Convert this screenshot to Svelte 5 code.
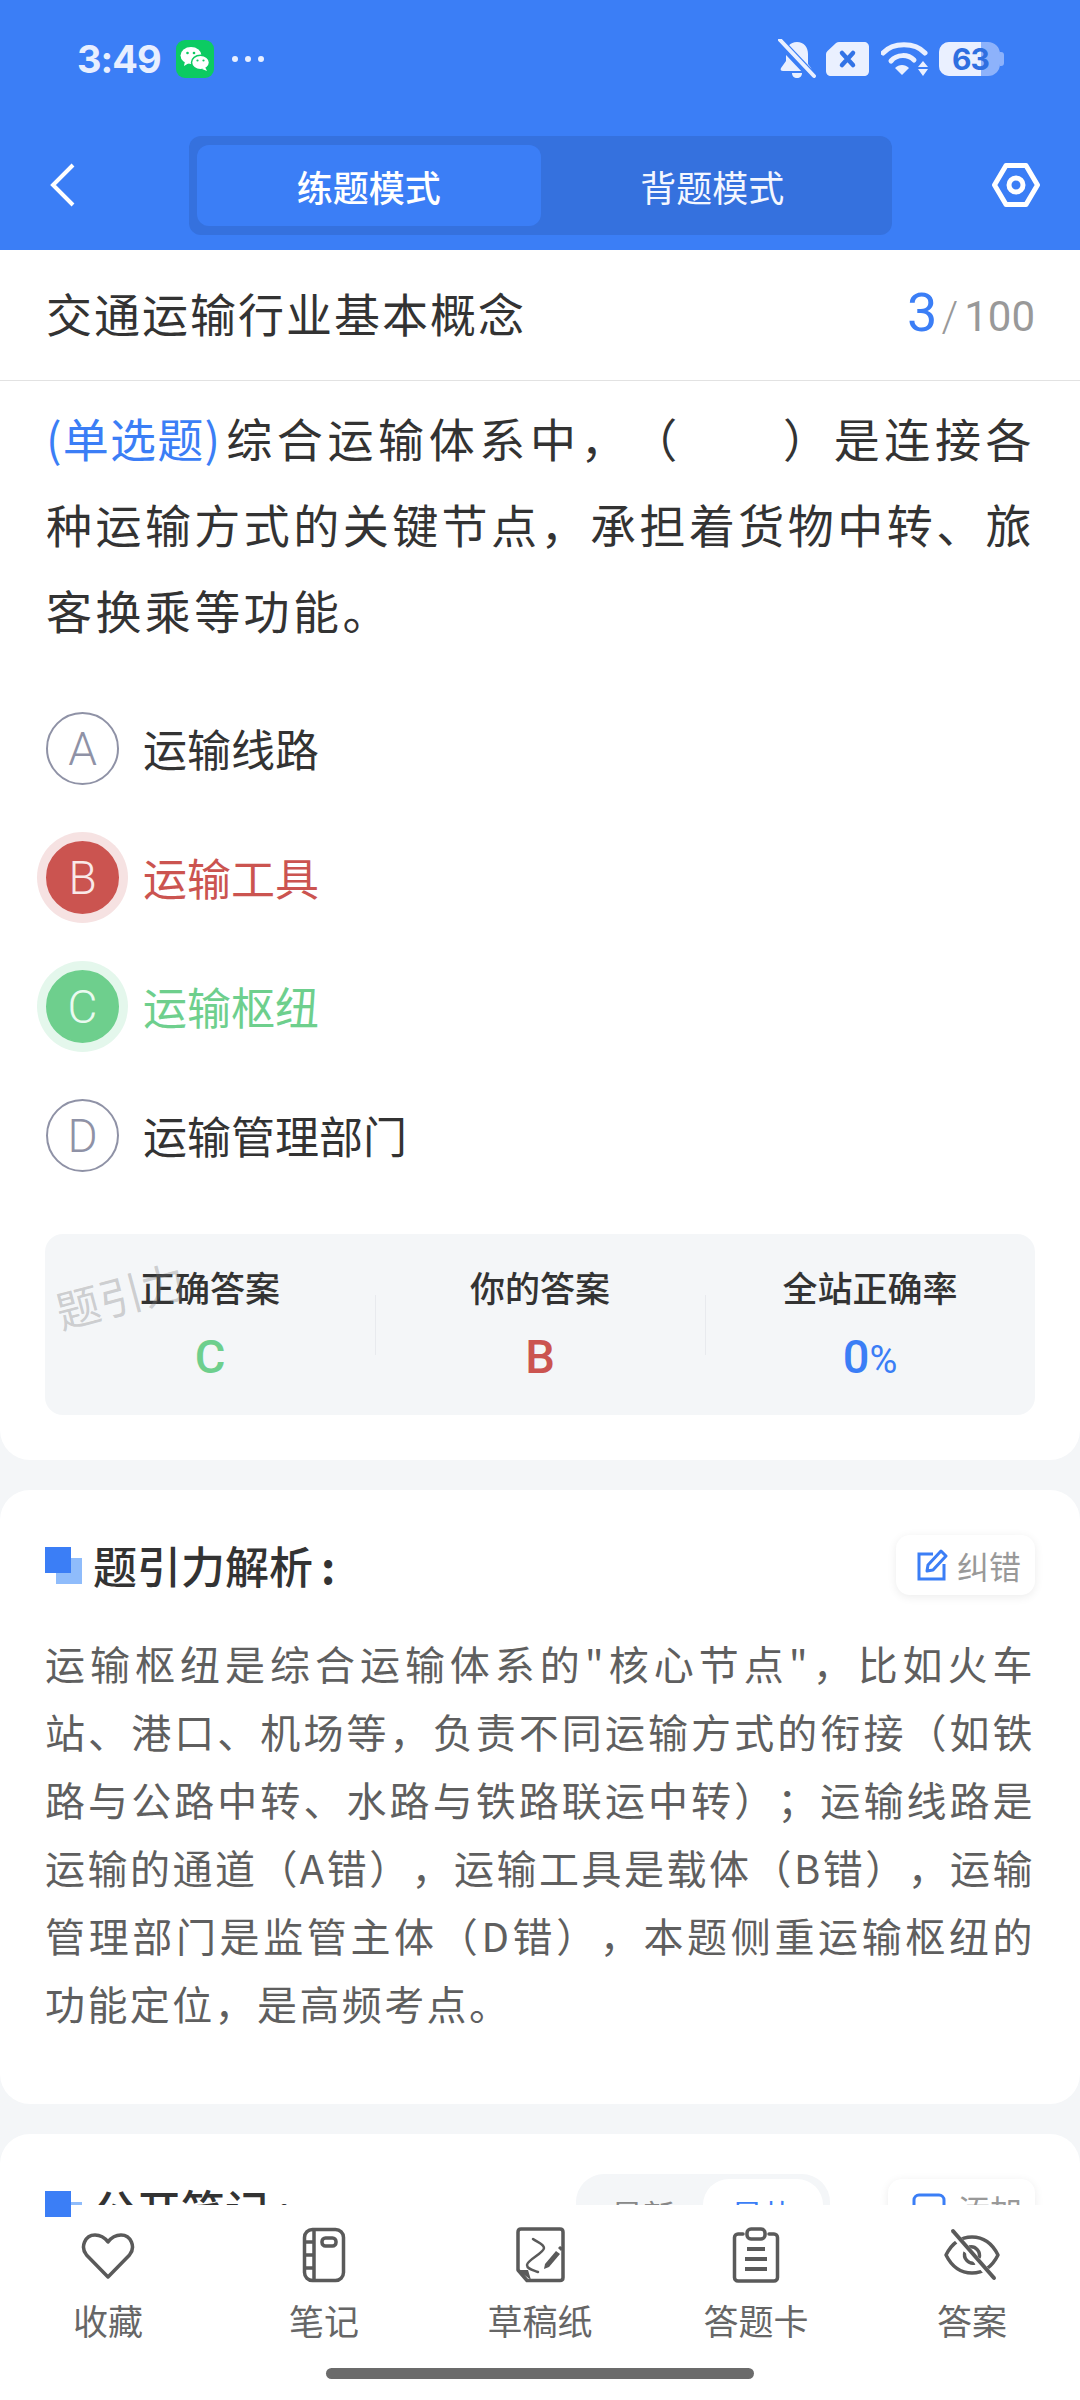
<script>
	const options = [
		{ key: 'A', text: '运输线路', state: '' },
		{ key: 'B', text: '运输工具', state: 'wrong' },
		{ key: 'C', text: '运输枢纽', state: 'right' },
		{ key: 'D', text: '运输管理部门', state: '' }
	];
	const stats = [
		{ label: '正确答案', value: 'C', cls: 'right' },
		{ label: '你的答案', value: 'B', cls: 'wrong' },
		{ label: '全站正确率', value: '0', unit: '%', cls: 'blue' }
	];
	const explain = '运输枢纽是综合运输体系的"核心节点"，比如火车站、港口、机场等，负责不同运输方式的衔接（如铁路与公路中转、水路与铁路联运中转）；运输线路是运输的通道（A错），运输工具是载体（B错），运输管理部门是监管主体（D错），本题侧重运输枢纽的功能定位，是高频考点。';
</script>

<div class="page">
	<header class="top">
		<div class="status">
			<span class="time">3:49</span>
			<svg class="wechat" width="38" height="38" viewBox="0 0 38 38">
				<rect width="38" height="38" rx="9" fill="#0ccb62" />
				<ellipse cx="15" cy="15.5" rx="10.5" ry="8.5" fill="#fff" />
				<path d="M9 21l-1 5 5-3z" fill="#fff" />
				<ellipse cx="24.5" cy="22.5" rx="9" ry="7.3" fill="#fff" stroke="#0ccb62" stroke-width="1.5" />
				<path d="M29 27l2 4-5-2z" fill="#fff" />
				<circle cx="11.500" cy="13" r="1.300" fill="#0ccb62" />
				<circle cx="18" cy="13" r="1.300" fill="#0ccb62" />
				<circle cx="21.500" cy="20.500" r="1.100" fill="#0ccb62" />
				<circle cx="27.500" cy="20.500" r="1.100" fill="#0ccb62" />
			</svg>
			<span class="dots"><i></i><i></i><i></i></span>
			<span class="spacer"></span>
			<svg width="38" height="40" viewBox="0 0 38 40" fill="#eaf0ff">
				<path d="M19 3c-7 0-11 5-11 12v7l-5 7c-1 2 0 3 2 3h26c2 0 3-1 2-3l-3-4V15c0-7-4-12-11-12z" />
				<path d="M14 34h10c0 3-2 5-5 5s-5-2-5-5z" />
				<path d="M2 3l33 35" stroke="#3b7ef6" stroke-width="9" />
				<path d="M2 1l34 36" stroke="#eaf0ff" stroke-width="4" stroke-linecap="round" />
			</svg>
			<svg class="sim" width="43" height="34" viewBox="0 0 43 34">
				<path d="M13 0h25c3 0 5 2 5 5v24c0 3-2 5-5 5H5c-3 0-5-2-5-5V12c0-1 .5-2 1.500-3L10 1c1-.7 2-1 3-1z" fill="#eaf0ff" />
				<path d="M16 11l11 12M27 11L16 23" stroke="#3273e6" stroke-width="4.500" stroke-linecap="round" />
			</svg>
			<svg class="wifi" width="47" height="34" viewBox="0 0 47 34" fill="none">
				<path d="M2 11C12 0 34 0 44 11" stroke="#eaf0ff" stroke-width="5" stroke-linecap="round" />
				<path d="M10 19c6-7 17-7 23-1" stroke="#eaf0ff" stroke-width="5" stroke-linecap="round" />
				<path d="M14 26c4-4 10-4 14 0l-7 7z" fill="#eaf0ff" />
				<path d="M42 19l5 6H37zM37 27h10l-5 7z" fill="#eaf0ff" />
			</svg>
			<div class="battery">
				<div class="batt-fill"></div>
				<span class="batt-num">63</span>
				<i class="batt-tip"></i>
			</div>
		</div>
		<nav class="bar">
			<svg class="back" width="26" height="46" viewBox="0 0 26 46" fill="none">
				<path d="M23 3L3 23l20 20" stroke="#fff" stroke-width="4" />
			</svg>
			<div class="seg">
				<div class="tab active">练题模式</div>
				<div class="tab">背题模式</div>
			</div>
			<svg class="gear" width="48" height="44" viewBox="0 0 48 44" fill="none">
				<path d="M14 2.500h20L45.500 22 34 41.500H14L2.500 22z" stroke="#fff" stroke-width="5" stroke-linejoin="round" />
				<circle cx="24" cy="22" r="7" stroke="#fff" stroke-width="5" />
			</svg>
		</nav>
	</header>

	<section class="card first">
		<div class="title-row">
			<h1>交通运输行业基本概念</h1>
			<div class="count"><b>3</b><span class="slash">/</span><span>100</span></div>
		</div>
		<div class="body">
			<p class="question"><span class="type">(单选题)</span>综合运输体系中，（　　）是连接各种运输方式的关键节点，承担着货物中转、旅客换乘等功能。</p>
			<div class="options">
				{#each options as o}
					<div class="option {o.state}">
						<span class="mark">{o.key}</span>
						<span class="opt-text">{o.text}</span>
					</div>
				{/each}
			</div>
			<div class="stats">
				<span class="watermark">题引力</span>
				{#each stats as s}
					<div class="stat">
						<div class="stat-label">{s.label}</div>
						<div class="stat-value {s.cls}">{s.value}{#if s.unit}<small>{s.unit}</small>{/if}</div>
					</div>
				{/each}
			</div>
		</div>
	</section>

	<section class="card">
		<div class="head">
			<span class="squares"><i></i><i></i></span>
			<h2>题引力解析<span class="colon">:</span></h2>
			<div class="pill">
				<svg width="32" height="32" viewBox="0 0 32 32" fill="none">
					<path d="M17 5H3v25h25V15" stroke="#3b7ef6" stroke-width="3" />
					<path d="M12 16L25 2l5 5-13 14-6 1z" stroke="#3b7ef6" stroke-width="3" stroke-linejoin="round" />
				</svg>
				<span>纠错</span>
			</div>
		</div>
		<p class="explain">{explain}</p>
	</section>

	<section class="card">
		<div class="head">
			<span class="squares"><i></i><i></i></span>
			<h2>公开笔记<span class="colon">:</span></h2>
			<div class="sort">
				<span>最新</span>
				<span class="on">最热</span>
			</div>
			<div class="pill add">
				<svg width="34" height="32" viewBox="0 0 34 32" fill="none">
					<rect x="2" y="2" width="30" height="27" rx="5" stroke="#3b7ef6" stroke-width="3" />
				</svg>
				<span>添加</span>
			</div>
		</div>
	</section>

	<footer class="dock">
		<div class="tools">
			<div class="tool">
				<svg width="56" height="56" viewBox="0 0 56 56" fill="none" stroke="#5a5a5a" stroke-width="3.500">
					<path d="M28 50L6.500 28C0 20 5 8 15 8c6 0 10 3 13 7 3-4 7-7 13-7 10 0 15 12 8.500 20z" stroke-linejoin="round" />
				</svg>
				<span>收藏</span>
			</div>
			<div class="tool">
				<svg width="56" height="56" viewBox="0 0 56 56" fill="none" stroke="#5a5a5a" stroke-width="3.500">
					<rect x="8.500" y="2.500" width="39" height="51" rx="8" />
					<path d="M18 3v50M8.500 15H18M8.500 28H18M8.500 41H18" />
					<rect x="26" y="11" width="14" height="8" rx="3.500" />
				</svg>
				<span>笔记</span>
			</div>
			<div class="tool">
				<svg width="56" height="56" viewBox="0 0 56 56" fill="none" stroke="#5a5a5a" stroke-width="3.500">
					<path d="M15 53.500H48c2 0 3-1 3-3V5c0-2-1-3-3-3H9C7 2 6 3 6 5v38z" stroke-linejoin="round" />
					<path d="M7 43h9l3 10-12-9z" fill="#5a5a5a" stroke="none" />
					<path d="M21 12c4 3 11 5 11 9 0 5-17 12-17 17 0 4 6 5 11 7" stroke-width="2.500" stroke-linecap="round" />
					<path d="M33 37l11-13 4 3-11 13-5 2z" fill="#5a5a5a" stroke="none" />
					<path d="M46 21l2-2 3 2-2 3z" fill="#5a5a5a" stroke="none" />
				</svg>
				<span>草稿纸</span>
			</div>
			<div class="tool">
				<svg width="56" height="56" viewBox="0 0 56 56" fill="none" stroke="#5a5a5a" stroke-width="3.500">
					<path d="M15 7H10c-2 0-3.500 1.500-3.500 3.500v40c0 2 1.500 3.500 3.500 3.500h36c2 0 3.500-1.500 3.500-3.500v-40C49.500 8.500 48 7 46 7h-5" stroke-linecap="round" />
					<rect x="19" y="2" width="18" height="10" rx="4" />
					<path d="M19 22h18M17 32h22M17 42h22" stroke-width="4" />
				</svg>
				<span>答题卡</span>
			</div>
			<div class="tool">
				<svg width="56" height="56" viewBox="0 0 56 56" fill="none" stroke="#5a5a5a" stroke-width="3.500">
					<path d="M2 28C8 16 17 10 28 10s20 6 26 18C48 40 39 46 28 46S8 40 2 28z" stroke-linejoin="round" />
					<path d="M21 25a8.500 8.500 0 0 0 10 11M35 31a8.500 8.500 0 0 0-10-11" />
					<path d="M7 4l42 48" stroke="#fff" stroke-width="7" />
					<path d="M9 4l41 47" stroke-width="4" stroke-linecap="round" />
				</svg>
				<span>答案</span>
			</div>
		</div>
		<div class="home"></div>
	</footer>
</div>

<style>
	:global(body) {
		margin: 0;
		background: #f4f6f8;
	}

	.page {
		position: relative;
		width: 1080px;
		height: 2400px;
		overflow: hidden;
		background: #f4f6f8;
		font-family: "Noto Sans CJK SC", "Noto Sans", sans-serif;
		color: #333;
		text-spacing-trim: space-all;
	}

	.top {
		height: 250px;
		background: #3b7ef6;
	}

	.status {
		display: flex;
		align-items: center;
		height: 117px;
		padding: 0 80px 0 77px;
		color: #e8efff;
	}

	.time {
		font-family: Inter, Roboto, sans-serif;
		font-size: 38px;
		font-weight: 700;
		letter-spacing: -1px;
		width: 99px;
	}

	.dots {
		display: flex;
		gap: 7px;
		margin-left: 18px;
	}

	.dots i {
		width: 6px;
		height: 6px;
		border-radius: 50%;
		background: #e8efff;
	}

	.spacer {
		flex: 1;
	}

	.sim {
		margin-left: 10px;
	}

	.wifi {
		margin-left: 12px;
	}

	.battery {
		position: relative;
		width: 61px;
		height: 34px;
		margin-left: 11px;
		border-radius: 10px 12px 12px 10px;
		background: #8db2fb;
	}

	.batt-fill {
		width: 42px;
		height: 34px;
		border-radius: 10px 0 0 10px;
		background: #eaf0ff;
	}

	.batt-num {
		position: absolute;
		left: 13px;
		top: 0;
		line-height: 34px;
		font-family: Inter, Roboto, sans-serif;
		font-size: 30px;
		font-weight: 700;
		color: #2f6fe0;
		letter-spacing: -1px;
	}

	.batt-tip {
		position: absolute;
		right: -4px;
		top: 10px;
		width: 4px;
		height: 14px;
		border-radius: 0 3px 3px 0;
		background: #8db2fb;
	}

	.bar {
		display: flex;
		align-items: flex-start;
		padding: 19px 40px 0 50px;
	}

	.back {
		margin-top: 26px;
	}

	.seg {
		display: flex;
		width: 703px;
		height: 99px;
		box-sizing: border-box;
		margin-left: 113px;
		padding: 9px 8px;
		border-radius: 12px;
		background: #3571de;
	}

	.tab {
		flex: 1;
		display: flex;
		align-items: center;
		justify-content: center;
		border-radius: 12px;
		font-size: 36px;
		color: #f4f7ff;
	}

	.tab.active {
		background: #3b7ef6;
		font-weight: 500;
		color: #fff;
	}

	.gear {
		margin-left: 100px;
		margin-top: 27px;
	}

	.card {
		margin-bottom: 30px;
		background: #fff;
		border-radius: 30px;
		padding: 45px 45px 0;
	}

	.card.first {
		height: 1210px;
		box-sizing: border-box;
		padding: 0;
		border-radius: 0 0 30px 30px;
	}

	.title-row {
		display: flex;
		align-items: center;
		justify-content: space-between;
		height: 131px;
		padding: 0 45px 6px 46px;
		box-sizing: border-box;
		border-bottom: 1px solid #e2e2e2;
	}

	h1 {
		margin: 0;
		font-size: 46px;
		font-weight: 400;
		letter-spacing: 2px;
		color: #333;
	}

	.count {
		display: flex;
		align-items: baseline;
		font-family: Roboto, sans-serif;
		font-size: 42px;
		font-weight: 400;
		color: #999;
	}

	.count b {
		font-size: 54px;
		font-weight: 400;
		color: #3b7ef6;
	}

	.slash {
		margin: 0 6px 0 4px;
		font-weight: 300;
	}

	.body {
		padding: 13px 45px 0 46px;
	}

	.question {
		margin: 0;
		font-size: 46px;
		line-height: 86px;
		letter-spacing: 3.400px;
		color: #333;
		text-align: justify;
	}

	.type {
		color: #3b7ef6;
		letter-spacing: 0;
		margin-right: 5px;
	}

	.options {
		display: flex;
		flex-direction: column;
		gap: 56px;
		margin-top: 60px;
	}

	.option {
		display: flex;
		align-items: center;
		gap: 24px;
		height: 73px;
	}

	.mark {
		display: flex;
		align-items: center;
		justify-content: center;
		box-sizing: border-box;
		width: 73px;
		height: 73px;
		border-radius: 50%;
		border: 2px solid #8f92a6;
		font-family: Roboto, sans-serif;
		font-size: 46px;
		font-weight: 300;
		color: #8f92a6;
	}

	.opt-text {
		font-size: 44px;
		color: #333;
		margin-top: -2px;
	}

	.wrong .mark {
		background: #cb5450;
		border-color: #cb5450;
		color: #f9e9e9;
		box-shadow: 0 0 0 9px #f6e2e2;
	}

	.wrong .opt-text {
		color: #cb5450;
	}

	.right .mark {
		background: #6ecf8d;
		border-color: #6ecf8d;
		color: #eafaf0;
		box-shadow: 0 0 0 9px #e4f7ec;
	}

	.right .opt-text {
		color: #6ecf8d;
	}

	.stats {
		position: relative;
		display: grid;
		grid-template-columns: repeat(3, 1fr);
		height: 181px;
		margin: 62px 0 0 -1px;
		border-radius: 18px;
		background: #f4f6f8;
	}

	.stat {
		position: relative;
		display: flex;
		flex-direction: column;
		align-items: center;
		padding-top: 28px;
	}

	.stat + .stat::before {
		content: '';
		position: absolute;
		left: 0;
		top: 61px;
		width: 1px;
		height: 60px;
		background: #e8eaee;
	}

	.stat-label {
		font-size: 35px;
		font-weight: 500;
		line-height: 50px;
		color: #333;
	}

	.stat-value {
		margin-top: 21px;
		font-family: Roboto, sans-serif;
		font-size: 47px;
		font-weight: 500;
		line-height: 48px;
	}

	.stat-value small {
		font-size: 38px;
		font-weight: 400;
	}

	.stat-value.right {
		color: #6ecf8d;
	}

	.stat-value.wrong {
		color: #cb5450;
	}

	.stat-value.blue {
		color: #3b7ef6;
	}

	.watermark {
		position: absolute;
		left: 9px;
		top: 28px;
		font-size: 44px;
		color: rgba(120, 120, 120, 0.33);
		transform: rotate(-15deg);
		z-index: 1;
	}

	.head {
		display: flex;
		align-items: center;
		height: 60px;
	}

	.squares {
		position: relative;
		width: 37px;
		height: 37px;
		margin-right: 11px;
	}

	.squares i {
		position: absolute;
		width: 26px;
		height: 26px;
		background: #3b7ef6;
	}

	.squares i:last-child {
		left: 11px;
		top: 11px;
		background: #8fbcfb;
		z-index: 0;
	}

	.squares i:first-child {
		z-index: 1;
	}

	h2 {
		flex: 1;
		margin: 0;
		font-size: 44px;
		font-weight: 500;
		color: #333;
	}

	.colon {
		margin-left: 8px;
		font-weight: 700;
	}

	.pill {
		display: flex;
		align-items: center;
		gap: 9px;
		height: 60px;
		padding: 0 14px 0 20px;
		border-radius: 14px;
		background: #fff;
		box-shadow: 0 2px 10px rgba(0, 0, 0, 0.08);
		font-size: 32px;
		color: #999;
	}

	.pill.add {
		gap: 12px;
		padding: 0 13px 0 24px;
	}

	.sort {
		display: flex;
		height: 60px;
		margin-right: 58px;
		padding: 5px 7px;
		border-radius: 28px;
		background: #f4f6f8;
		font-size: 32px;
		color: #888;
	}

	.sort span {
		display: flex;
		align-items: center;
		justify-content: center;
		width: 120px;
		padding-top: 10px;
	}

	.sort .on {
		border-radius: 26px;
		background: #fff;
		color: #3b7ef6;
	}

	.explain {
		margin: 34px 0 0;
		padding-bottom: 67px;
		font-size: 40px;
		line-height: 68px;
		letter-spacing: 2.400px;
		color: #5f5f5f;
		text-align: justify;
	}

	.dock {
		position: absolute;
		left: 0;
		right: 0;
		bottom: 0;
		height: 195px;
		background: #fff;
	}

	.tools {
		display: grid;
		grid-template-columns: repeat(5, 216px);
		padding-top: 22px;
	}

	.tool {
		display: flex;
		flex-direction: column;
		align-items: center;
		font-size: 35px;
		line-height: 50px;
		color: #666;
	}

	.tool span {
		margin-top: 12px;
	}

	.home {
		position: absolute;
		left: 326px;
		bottom: 21px;
		width: 428px;
		height: 11px;
		border-radius: 6px;
		background: #6b6b6b;
	}
</style>
